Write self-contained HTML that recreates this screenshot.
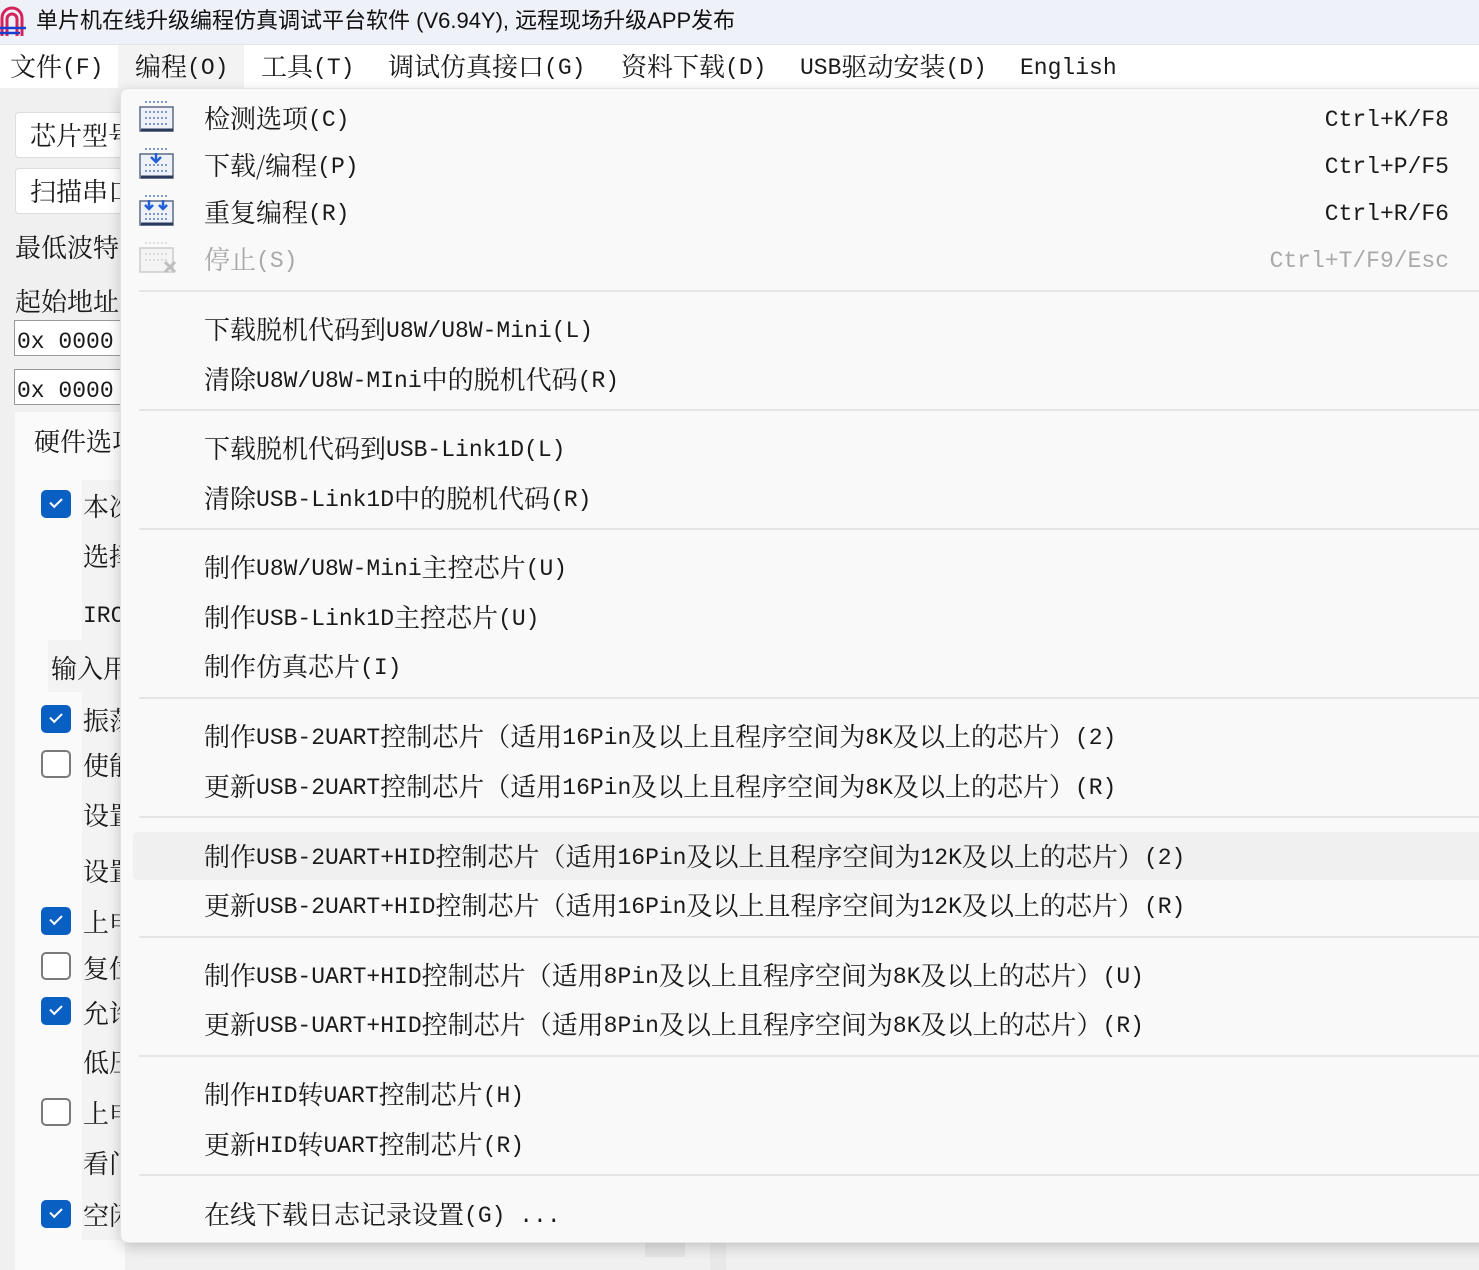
<!DOCTYPE html>
<html><head><meta charset="utf-8"><style>
*{margin:0;padding:0;box-sizing:border-box}
body{width:1479px;height:1270px;overflow:hidden;background:#f0f0f0;position:relative;font-family:"Noto Serif CJK SC","Noto Sans CJK SC",serif;color:#1a1a1a}
.a{position:absolute;white-space:nowrap}
.l{font-family:"Liberation Mono",monospace;font-size:23px;position:relative;top:-2px}
.t{font-size:26px;line-height:30px}
#title{left:0;top:0;width:1479px;height:45px;background:#eef1f7;border-bottom:1px solid #e2e5ea}
#mb{left:0;top:45px;width:1479px;height:43px;background:#fff}
.mi{top:49px;font-size:26px;line-height:34px}
#menu{left:120px;top:88px;width:1380px;height:1155px;background:#f9f9f9;border-radius:8px;box-shadow:0 4px 14px rgba(0,0,0,.18);border:1px solid #e4e4e4}
.sep{position:absolute;left:18px;right:0;height:2px;background:#e5e5e5}
.it{position:absolute;left:83px;font-size:26px;line-height:30px;white-space:nowrap}
.sc{position:absolute;right:50px;font-size:23px;line-height:30px}
.dis{color:#a8a8a8}
.cb{position:absolute;left:41px;width:30px;height:28px;border-radius:5px}
.on{background:#0a5fc2}
.on:after{content:"";position:absolute;left:9px;top:8px;width:10px;height:5px;border-left:2px solid #fff;border-bottom:2px solid #fff;transform:rotate(-45deg)}
.off{border:2px solid #7a7a7a;background:#fff}
.box{position:absolute;background:#fff;border:1px solid #ddd;border-radius:4px}
</style></head><body>
<div class="a" id="title"></div>
<svg class="a" style="left:0;top:6px" width="30" height="32"><path d="M2 30V12a10 10 0 0 1 20 0v18" stroke="#d2245a" stroke-width="3" fill="none"/><path d="M7 30V13a5 5 0 0 1 10 0v17" stroke="#d2245a" stroke-width="3" fill="none"/><path d="M0 22h26M0 27h20" stroke="#1a3fcf" stroke-width="2.5"/></svg>
<div class="a" style="left:36px;top:6px;font-family:'Liberation Sans','Noto Sans CJK SC',sans-serif;font-size:22px;line-height:30px;color:#111">单片机在线升级编程仿真调试平台软件 (V6.94Y), 远程现场升级APP发布</div>
<div class="a" id="mb"></div>
<div class="a" style="left:118px;top:45px;width:126px;height:43px;background:#f3f3f3"></div>
<div class="a mi" style="left:10px">文件<span class="l">(F)</span></div>
<div class="a mi" style="left:135px">编程<span class="l">(O)</span></div>
<div class="a mi" style="left:261px">工具<span class="l">(T)</span></div>
<div class="a mi" style="left:388px">调试仿真接口<span class="l">(G)</span></div>
<div class="a mi" style="left:621px">资料下载<span class="l">(D)</span></div>
<div class="a mi" style="left:800px"><span class="l">USB</span>驱动安装<span class="l">(D)</span></div>
<div class="a mi" style="left:1020px"><span class="l">English</span></div>

<div class="box" style="left:15px;top:112px;width:120px;height:46px"></div>
<div class="box" style="left:15px;top:168px;width:120px;height:46px"></div>
<div class="a t" style="left:30px;top:120px">芯片型号</div>
<div class="a t" style="left:30px;top:176px">扫描串口</div>
<div class="a t" style="left:15px;top:232px">最低波特</div>
<div class="a t" style="left:15px;top:286px">起始地址</div>
<div class="box" style="left:14px;top:320px;width:110px;height:36px;border-radius:0;border-color:#999"></div>
<div class="box" style="left:14px;top:369px;width:110px;height:36px;border-radius:0;border-color:#999"></div>
<div class="a t" style="left:17px;top:325px"><span class="l">0x 0000</span></div>
<div class="a t" style="left:17px;top:374px"><span class="l">0x 0000</span></div>
<div class="a" style="left:15px;top:412px;width:110px;height:858px;background:#fafafa"></div>
<div class="a t" style="left:34px;top:426px">硬件选项</div>
<div class="a" style="left:82px;top:480px;width:40px;height:760px;background:#f3f3f3"></div>
<div class="cb on" style="top:490px"></div><div class="a t" style="left:83px;top:491px">本次</div>
<div class="a t" style="left:83px;top:541px">选择</div>
<div class="a t" style="left:83px;top:599px"><span class="l">IRC</span></div>
<div class="a" style="left:48px;top:640px;width:75px;height:52px;background:#f3f3f3"></div>
<div class="a t" style="left:51px;top:653px">输入用</div>
<div class="cb on" style="top:705px"></div><div class="a t" style="left:83px;top:705px">振荡</div>
<div class="cb off" style="top:750px"></div><div class="a t" style="left:83px;top:750px">使能</div>
<div class="a t" style="left:83px;top:800px">设置</div>
<div class="a t" style="left:83px;top:856px">设置</div>
<div class="cb on" style="top:907px"></div><div class="a t" style="left:83px;top:907px">上电</div>
<div class="cb off" style="top:952px"></div><div class="a t" style="left:83px;top:953px">复位</div>
<div class="cb on" style="top:997px"></div><div class="a t" style="left:83px;top:998px">允许</div>
<div class="a t" style="left:83px;top:1047px">低压</div>
<div class="cb off" style="top:1098px"></div><div class="a t" style="left:83px;top:1098px">上电</div>
<div class="a t" style="left:83px;top:1148px">看门</div>
<div class="cb on" style="top:1200px"></div><div class="a t" style="left:83px;top:1200px">空闲</div>
<div class="a" style="left:645px;top:1243px;width:40px;height:14px;background:#e4e4e4"></div>
<div class="a" style="left:710px;top:1243px;width:16px;height:27px;background:#e8e8e8"></div>

<div class="a" id="menu">
<svg style="position:absolute;left:18px;top:8px" width="40" height="190">
<g fill="none"><rect x="1" y="10" width="33" height="24" fill="#eef2f8" stroke="#5a6a85" stroke-width="1.5"/><path d="M2 33h32" stroke="#2a3a5a" stroke-width="3"/><path d="M6 5h24M6 15h24M6 21h24M6 27h24" stroke="#5b7bbb" stroke-dasharray="2 2" stroke-width="1.5"/></g>
<g transform="translate(0,47)" fill="none"><rect x="1" y="10" width="33" height="24" fill="#eef2f8" stroke="#5a6a85" stroke-width="1.5"/><path d="M2 33h32" stroke="#2a3a5a" stroke-width="3"/><path d="M6 5h24M6 21h24M6 27h24" stroke="#5b7bbb" stroke-dasharray="2 2" stroke-width="1.5"/><path d="M17 9v9M12 13l5 5 5-5" stroke="#2260d8" stroke-width="2.5"/></g>
<g transform="translate(0,94)" fill="none"><rect x="1" y="10" width="33" height="24" fill="#eef2f8" stroke="#5a6a85" stroke-width="1.5"/><path d="M2 33h32" stroke="#2a3a5a" stroke-width="3"/><path d="M6 5h24M6 23h24M6 28h24" stroke="#5b7bbb" stroke-dasharray="2 2" stroke-width="1.5"/><path d="M10 9v9M6 14l4 4 4-4M24 9v9M20 14l4 4 4-4" stroke="#2260d8" stroke-width="2.5"/></g>
<g transform="translate(0,141)" fill="none" opacity=".45"><rect x="1" y="10" width="33" height="24" fill="#eee" stroke="#999" stroke-width="1.5"/><path d="M6 5h24M6 16h24M6 22h24" stroke="#aaa" stroke-dasharray="2 2" stroke-width="1.5"/><path d="M26 24l10 10M36 24l-10 10" stroke="#777" stroke-width="3"/></g>
</svg>
<div class="it" style="top:14px">检测选项<span class="l">(C)</span></div><div class="sc l" style="top:16px">Ctrl+K/F8</div>
<div class="it" style="top:61px">下载/编程<span class="l">(P)</span></div><div class="sc l" style="top:63px">Ctrl+P/F5</div>
<div class="it" style="top:108px">重复编程<span class="l">(R)</span></div><div class="sc l" style="top:110px">Ctrl+R/F6</div>
<div class="it dis" style="top:155px">停止<span class="l">(S)</span></div><div class="sc l dis" style="top:157px">Ctrl+T/F9/Esc</div>
<div class="sep" style="top:201px"></div>
<div class="it" style="top:225px">下载脱机代码到<span class="l">U8W/U8W-Mini(L)</span></div>
<div class="it" style="top:275px">清除<span class="l">U8W/U8W-MIni</span>中的脱机代码<span class="l">(R)</span></div>
<div class="sep" style="top:320px"></div>
<div class="it" style="top:344px">下载脱机代码到<span class="l">USB-Link1D(L)</span></div>
<div class="it" style="top:394px">清除<span class="l">USB-Link1D</span>中的脱机代码<span class="l">(R)</span></div>
<div class="sep" style="top:439px"></div>
<div class="it" style="top:463px">制作<span class="l">U8W/U8W-Mini</span>主控芯片<span class="l">(U)</span></div>
<div class="it" style="top:513px">制作<span class="l">USB-Link1D</span>主控芯片<span class="l">(U)</span></div>
<div class="it" style="top:562px">制作仿真芯片<span class="l">(I)</span></div>
<div class="sep" style="top:608px"></div>
<div class="it" style="top:632px">制作<span class="l">USB-2UART</span>控制芯片（适用<span class="l">16Pin</span>及以上且程序空间为<span class="l">8K</span>及以上的芯片）<span class="l">(2)</span></div>
<div class="it" style="top:682px">更新<span class="l">USB-2UART</span>控制芯片（适用<span class="l">16Pin</span>及以上且程序空间为<span class="l">8K</span>及以上的芯片）<span class="l">(R)</span></div>
<div class="sep" style="top:727px"></div>
<div style="position:absolute;left:12px;right:0;top:743px;height:48px;background:#f0f0f0;border-radius:4px"></div>
<div class="it" style="top:752px">制作<span class="l">USB-2UART+HID</span>控制芯片（适用<span class="l">16Pin</span>及以上且程序空间为<span class="l">12K</span>及以上的芯片）<span class="l">(2)</span></div>
<div class="it" style="top:801px">更新<span class="l">USB-2UART+HID</span>控制芯片（适用<span class="l">16Pin</span>及以上且程序空间为<span class="l">12K</span>及以上的芯片）<span class="l">(R)</span></div>
<div class="sep" style="top:847px"></div>
<div class="it" style="top:871px">制作<span class="l">USB-UART+HID</span>控制芯片（适用<span class="l">8Pin</span>及以上且程序空间为<span class="l">8K</span>及以上的芯片）<span class="l">(U)</span></div>
<div class="it" style="top:920px">更新<span class="l">USB-UART+HID</span>控制芯片（适用<span class="l">8Pin</span>及以上且程序空间为<span class="l">8K</span>及以上的芯片）<span class="l">(R)</span></div>
<div class="sep" style="top:966px"></div>
<div class="it" style="top:990px">制作<span class="l">HID</span>转<span class="l">UART</span>控制芯片<span class="l">(H)</span></div>
<div class="it" style="top:1040px">更新<span class="l">HID</span>转<span class="l">UART</span>控制芯片<span class="l">(R)</span></div>
<div class="sep" style="top:1085px"></div>
<div class="it" style="top:1110px">在线下载日志记录设置<span class="l">(G) ...</span></div>
</div>
</body></html>
